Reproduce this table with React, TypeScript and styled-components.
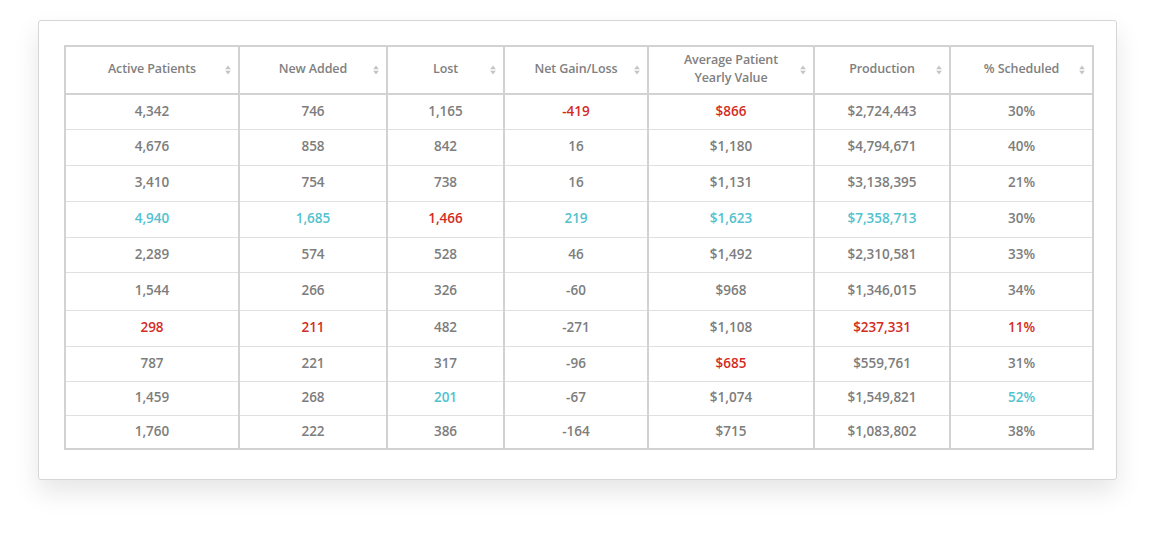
import React from 'react';
import styled, { createGlobalStyle } from 'styled-components';

const GlobalStyle = createGlobalStyle`
    html, body {
        margin: 0;
        padding: 0;
        background: #ffffff;
    }
    body {
        font-family: 'Open Sans', 'Liberation Sans', sans-serif;
    }
`;

const Page = styled.div`
    padding: 20px 39px 57px 38px;
`;

const Card = styled.div`
    background: #fff;
    border: 1px solid #d6d6d6;
    border-radius: 3px;
    box-shadow: 0 12px 26px rgba(0, 0, 0, 0.1);
    padding: 24px 24px 29px 25px;
`;

const Table = styled.table`
    width: 1028px;
    table-layout: fixed;
    border-collapse: collapse;
    border: 2px solid #d2d2d2;
`;

const Col = styled.col<{ $w: number }>`
    width: ${(p) => p.$w}px;
`;

const HeadCell = styled.th`
    position: relative;
    height: 43px;
    padding: 0 22px 3px;
    border-left: 2px solid #d2d2d2;
    border-bottom: 2px solid #d2d2d2;
    font-size: 12.5px;
    font-weight: 600;
    line-height: 18px;
    color: #808080;
    text-align: center;
    letter-spacing: -0.1px;
`;

const SortIcon = styled.svg`
    position: absolute;
    right: 7px;
    top: 50%;
    margin-top: -5px;
`;

const Row = styled.tr<{ $h: number }>`
    height: ${(p) => p.$h}px;
`;

type Tone = 'gray' | 'red' | 'teal';

const tones: Record<Tone, string> = {
    gray: '#7d7d7d',
    red: '#d42b1f',
    teal: '#52c2d0'
};

const Cell = styled.td<{ $tone: Tone }>`
    padding: 0 0 2px;
    border-left: 2px solid #d2d2d2;
    border-top: 1px solid #e0e0e0;
    font-size: 13.5px;
    font-weight: 600;
    color: ${(p) => tones[p.$tone]};
    text-align: center;
    vertical-align: middle;
`;

const columns = [
    { label: 'Active Patients', w: 174 },
    { label: 'New Added', w: 148 },
    { label: 'Lost', w: 117 },
    { label: 'Net Gain/Loss', w: 144 },
    { label: 'Average Patient Yearly Value', w: 166 },
    { label: 'Production', w: 136 },
    { label: '% Scheduled', w: 143 }
];

// r = red, t = teal, '-' = gray
const rows: { h: number; cells: string[]; tones: string }[] = [
    { h: 35, cells: ['4,342', '746', '1,165', '-419', '$866', '$2,724,443', '30%'], tones: '---rr--' },
    { h: 36, cells: ['4,676', '858', '842', '16', '$1,180', '$4,794,671', '40%'], tones: '-------' },
    { h: 36, cells: ['3,410', '754', '738', '16', '$1,131', '$3,138,395', '21%'], tones: '-------' },
    { h: 36, cells: ['4,940', '1,685', '1,466', '219', '$1,623', '$7,358,713', '30%'], tones: 'ttrttt-' },
    { h: 35, cells: ['2,289', '574', '528', '46', '$1,492', '$2,310,581', '33%'], tones: '-------' },
    { h: 38, cells: ['1,544', '266', '326', '-60', '$968', '$1,346,015', '34%'], tones: '-------' },
    { h: 36, cells: ['298', '211', '482', '-271', '$1,108', '$237,331', '11%'], tones: 'rr---rr' },
    { h: 35, cells: ['787', '221', '317', '-96', '$685', '$559,761', '31%'], tones: '----r--' },
    { h: 34, cells: ['1,459', '268', '201', '-67', '$1,074', '$1,549,821', '52%'], tones: '--t---t' },
    { h: 34, cells: ['1,760', '222', '386', '-164', '$715', '$1,083,802', '38%'], tones: '-------' }
];

const toneOf = (c: string): Tone => (c === 'r' ? 'red' : c === 't' ? 'teal' : 'gray');

function Sort() {
    return (
        <SortIcon width="6" height="10" viewBox="0 0 6 10">
            <path d="M3 0.5 L5.8 4.2 H0.2 Z" fill="#c4c4c4" />
            <path d="M3 9.5 L5.8 5.8 H0.2 Z" fill="#c4c4c4" />
        </SortIcon>
    );
}

export default function App() {
    return (
        <Page>
            <GlobalStyle />
            <Card>
                <Table>
                    <colgroup>
                        {columns.map((c) => (
                            <Col key={c.label} $w={c.w} />
                        ))}
                    </colgroup>
                    <thead>
                        <tr>
                            {columns.map((c) => (
                                <HeadCell key={c.label}>
                                    {c.label}
                                    <Sort />
                                </HeadCell>
                            ))}
                        </tr>
                    </thead>
                    <tbody>
                        {rows.map((r, i) => (
                            <Row key={i} $h={r.h}>
                                {r.cells.map((v, j) => (
                                    <Cell key={j} $tone={toneOf(r.tones[j])}>
                                        {v}
                                    </Cell>
                                ))}
                            </Row>
                        ))}
                    </tbody>
                </Table>
            </Card>
        </Page>
    );
}
